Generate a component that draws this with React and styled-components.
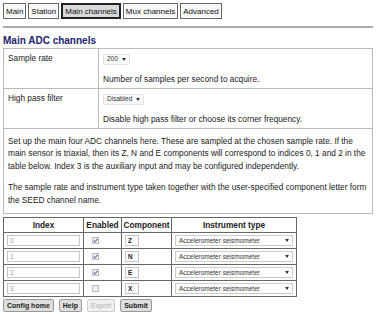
import React from "react";
import styled, { createGlobalStyle, css } from "styled-components";

const GlobalStyle = createGlobalStyle`
  html, body { margin: 0; padding: 0; background: #fff; }
  body {
    font-family: "Liberation Sans", Arial, sans-serif;
    font-size: 8.3px;
    color: #222;
  }
  * { box-sizing: border-box; }
`;

const Page = styled.div`
  padding: 3px 5px 3px 3px;
  width: 378px;
`;

const TabBar = styled.nav`
  display: flex;
  gap: 2px;
`;

const Tab = styled.a`
  display: flex;
  align-items: center;
  height: 16px;
  padding: 0 2px;
  font-size: 8px;
  color: #111;
  text-decoration: none;
  border: 1px solid #666;
  background: #f6f6f6;
  box-shadow: inset 0 0 0 1px #fff;
  ${(p) =>
    p.$active &&
    css`
      border: 2px solid #222;
      background: #d9d9d9;
      box-shadow: none;
    `}
`;

const Rule = styled.hr`
  margin: 7px 0 0;
  width: 370px;
  border: 0;
  border-top: 2px solid #aaa;
`;

const Heading = styled.h2`
  margin: 7px 0 1px;
  font-size: 10px;
  font-weight: bold;
  color: #232370;
  line-height: 12px;
`;

const SettingsTable = styled.table`
  width: 370px;
  border-collapse: collapse;
  td {
    border: 1px solid #bbb;
    vertical-align: top;
    padding: 3px 4px;
    line-height: 12px;
  }
`;

const LabelCell = styled.td`
  width: 95px;
`;

const SmallSelect = styled.div`
  display: inline-flex;
  align-items: center;
  gap: 4px;
  height: 11px;
  padding: 0 3px;
  font-size: 6.5px;
  border: 1px solid #e2e2e2;
  border-radius: 2px;
  background: #fbfbfb;
  color: #333;
  line-height: 1;
  margin-top: 1px;
`;

const Arrow = () => (
  <svg width="4" height="3" viewBox="0 0 4 3">
    <path d="M0 0 L4 0 L2 3 Z" fill="#333" />
  </svg>
);

const HelpText = styled.p`
  margin: 8px 0 0;
`;

const NoteCell = styled.td.attrs({ colSpan: 2 })`
  && { padding: 6px 4px 7px; }
  p { margin: 0; line-height: 12.5px; }
  p + p { margin-top: 9px; }
`;

const ChannelTable = styled.table`
  margin-top: 3px;
  border-collapse: collapse;
  border: 1px solid #666;
  th, td {
    border: 1px solid #666;
  }
  th {
    font-weight: bold;
    height: 15px;
    padding: 0 1px;
    text-align: center;
  }
  td {
    height: 16px;
    padding: 0 3px;
    vertical-align: middle;
  }
`;

const Col = styled.col`
  width: ${(p) => p.$w}px;
`;

const TextInput = styled.div`
  width: ${(p) => p.$w}px;
  height: 11px;
  border: 1px solid #c4c4c4;
  padding: 0 2px;
  font-size: 6.5px;
  line-height: 9px;
  color: ${(p) => (p.$strong ? "#222" : "#999")};
  font-weight: ${(p) => (p.$strong ? "bold" : "normal")};
  background: #fff;
`;

const CheckCell = styled.td`
  && { padding-left: 8px; }
`;

const CheckBox = styled.span`
  display: block;
  width: 7px;
  height: 7px;
  border: 1px solid #b8b8c4;
  background: #eef0f6;
  svg { display: block; }
`;

const Check = ({ on }) => (
  <CheckBox>
    {on && (
      <svg width="5" height="5" viewBox="0 0 5 5">
        <path d="M0.6 2.6 L2 4 L4.4 0.8" stroke="#5c6f9e" strokeWidth="1.1" fill="none" />
      </svg>
    )}
  </CheckBox>
);

const WideSelect = styled.div`
  width: 118px;
  height: 11px;
  display: flex;
  align-items: center;
  justify-content: space-between;
  padding: 0 3px;
  border: 1px solid #ccc;
  font-size: 6.5px;
  color: #333;
  background: #fff;
`;

const ButtonRow = styled.div`
  display: flex;
  gap: 5px;
  margin-top: 2px;
`;

const Button = styled.button`
  font-family: "Liberation Sans", Arial, sans-serif;
  font-size: 7px;
  font-weight: bold;
  height: 13px;
  padding: 0 3px;
  line-height: 1;
  color: #222;
  background: #dedede;
  border: 1px solid #999;
  border-radius: 2px;
  &:disabled {
    color: #b0b0b0;
    background: #f0f0f0;
    border-color: #ccc;
    font-weight: normal;
  }
`;

const channels = [
  { idx: "0", on: true, comp: "Z" },
  { idx: "1", on: true, comp: "N" },
  { idx: "2", on: true, comp: "E" },
  { idx: "3", on: false, comp: "X" },
];

export default function App() {
  return (
    <Page>
      <GlobalStyle />
      <TabBar>
        <Tab>Main</Tab>
        <Tab>Station</Tab>
        <Tab $active>Main channels</Tab>
        <Tab>Mux channels</Tab>
        <Tab>Advanced</Tab>
      </TabBar>
      <Rule />
      <Heading>Main ADC channels</Heading>
      <SettingsTable>
        <tbody>
          <tr>
            <LabelCell>Sample rate</LabelCell>
            <td>
              <SmallSelect>
                200 <Arrow />
              </SmallSelect>
              <HelpText>Number of samples per second to acquire.</HelpText>
            </td>
          </tr>
          <tr>
            <LabelCell>High pass filter</LabelCell>
            <td>
              <SmallSelect>
                Disabled <Arrow />
              </SmallSelect>
              <HelpText>Disable high pass filter or choose its corner frequency.</HelpText>
            </td>
          </tr>
          <tr>
            <NoteCell>
              <p>
                Set up the main four ADC channels here. These are sampled at the chosen sample rate. If the
                main sensor is triaxial, then its Z, N and E components will correspond to indices 0, 1 and 2 in
                the table below. Index 3 is the auxiliary input and may be configured independently.
              </p>
              <p>
                The sample rate and instrument type taken together with the user-specified component letter
                form the SEED channel name.
              </p>
            </NoteCell>
          </tr>
        </tbody>
      </SettingsTable>
      <ChannelTable>
        <colgroup>
          <Col $w={79} />
          <Col $w={38} />
          <Col $w={50} />
          <Col $w={124} />
        </colgroup>
        <thead>
          <tr>
            <th>Index</th>
            <th>Enabled</th>
            <th>Component</th>
            <th>Instrument type</th>
          </tr>
        </thead>
        <tbody>
          {channels.map((c) => (
            <tr key={c.idx}>
              <td>
                <TextInput $w={73}>{c.idx}</TextInput>
              </td>
              <CheckCell>
                <Check on={c.on} />
              </CheckCell>
              <td>
                <TextInput $w={14} $strong>
                  {c.comp}
                </TextInput>
              </td>
              <td>
                <WideSelect>
                  Accelerometer seismometer <Arrow />
                </WideSelect>
              </td>
            </tr>
          ))}
        </tbody>
      </ChannelTable>
      <ButtonRow>
        <Button>Config home</Button>
        <Button>Help</Button>
        <Button disabled>Export</Button>
        <Button>Submit</Button>
      </ButtonRow>
    </Page>
  );
}
